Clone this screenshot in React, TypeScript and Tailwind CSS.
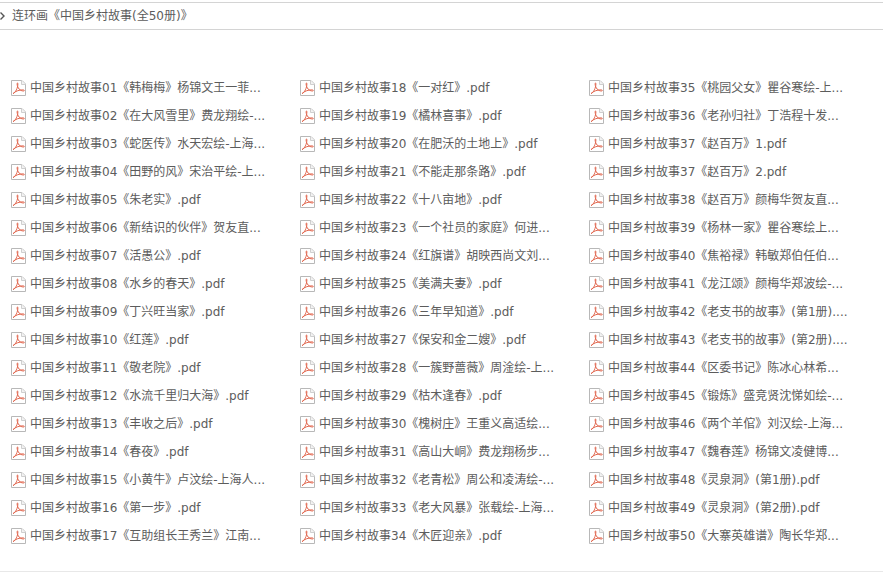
const col1 = [
  '中国乡村故事01《韩梅梅》杨锦文王一菲...',
  '中国乡村故事02《在大风雪里》费龙翔绘-...',
  '中国乡村故事03《蛇医传》水天宏绘-上海...',
  '中国乡村故事04《田野的风》宋治平绘-上...',
  '中国乡村故事05《朱老实》.pdf',
  '中国乡村故事06《新结识的伙伴》贺友直...',
  '中国乡村故事07《活愚公》.pdf',
  '中国乡村故事08《水乡的春天》.pdf',
  '中国乡村故事09《丁兴旺当家》.pdf',
  '中国乡村故事10《红莲》.pdf',
  '中国乡村故事11《敬老院》.pdf',
  '中国乡村故事12《水流千里归大海》.pdf',
  '中国乡村故事13《丰收之后》.pdf',
  '中国乡村故事14《春夜》.pdf',
  '中国乡村故事15《小黄牛》卢汶绘-上海人...',
  '中国乡村故事16《第一步》.pdf',
  '中国乡村故事17《互助组长王秀兰》江南...',
]

const col2 = [
  '中国乡村故事18《一对红》.pdf',
  '中国乡村故事19《橘林喜事》.pdf',
  '中国乡村故事20《在肥沃的土地上》.pdf',
  '中国乡村故事21《不能走那条路》.pdf',
  '中国乡村故事22《十八亩地》.pdf',
  '中国乡村故事23《一个社员的家庭》何进...',
  '中国乡村故事24《红旗谱》胡映西尚文刘...',
  '中国乡村故事25《美满夫妻》.pdf',
  '中国乡村故事26《三年早知道》.pdf',
  '中国乡村故事27《保安和金二嫂》.pdf',
  '中国乡村故事28《一簇野蔷薇》周淦绘-上...',
  '中国乡村故事29《枯木逢春》.pdf',
  '中国乡村故事30《槐树庄》王重义高适绘...',
  '中国乡村故事31《高山大峒》费龙翔杨步...',
  '中国乡村故事32《老青松》周公和凌涛绘-...',
  '中国乡村故事33《老大风暴》张载绘-上海...',
  '中国乡村故事34《木匠迎亲》.pdf',
]

const col3 = [
  '中国乡村故事35《桃园父女》瞿谷寒绘-上...',
  '中国乡村故事36《老孙归社》丁浩程十发...',
  '中国乡村故事37《赵百万》1.pdf',
  '中国乡村故事37《赵百万》2.pdf',
  '中国乡村故事38《赵百万》颜梅华贺友直...',
  '中国乡村故事39《杨林一家》瞿谷寒绘上...',
  '中国乡村故事40《焦裕禄》韩敏郑伯任伯...',
  '中国乡村故事41《龙江颂》颜梅华郑波绘-...',
  '中国乡村故事42《老支书的故事》(第1册)....',
  '中国乡村故事43《老支书的故事》(第2册)....',
  '中国乡村故事44《区委书记》陈冰心林希...',
  '中国乡村故事45《锻炼》盛竞贤沈悌如绘-...',
  '中国乡村故事46《两个羊倌》刘汉绘-上海...',
  '中国乡村故事47《魏春莲》杨锦文凌健博...',
  '中国乡村故事48《灵泉洞》(第1册).pdf',
  '中国乡村故事49《灵泉洞》(第2册).pdf',
  '中国乡村故事50《大寨英雄谱》陶长华郑...',
]

function PdfIcon() {
  return (
    <svg width="15" height="16" viewBox="0 0 15 16" className="shrink-0">
      <path d="M0.5 0.5H11L14.5 4V15.5H0.5Z" fill="#fff" stroke="#b8b8b8" />
      <path d="M10.5 0.5V4.5H14.5" fill="#f2f2f2" stroke="#cfcfcf" />
      <path
        d="M2 13.6C4.6 12.6 6.8 8 6.9 3.8C6.9 2.6 6 2.6 6.1 4C6.4 8 9 11 12.6 11C13.6 11 13.6 9.9 12.4 9.9C8.6 9.7 4.6 11 2 13.6Z"
        fill="none"
        stroke="#e2674f"
        strokeWidth="1"
      />
    </svg>
  )
}

function FileColumn({ files }: { files: string[] }) {
  return (
    <ul className="flex flex-col">
      {files.map((name) => (
        <li key={name} className="flex h-[28px] items-center gap-[4px]">
          <PdfIcon />
          <span className="whitespace-nowrap">{name}</span>
        </li>
      ))}
    </ul>
  )
}

export default function App() {
  return (
    <div className="h-[582px] w-[883px] overflow-hidden bg-white pt-[2px] font-['DejaVu_Sans','Noto_Sans_CJK_SC',sans-serif] text-xs text-[#5c5c5c]">
      <header className="flex h-[28px] items-center gap-[7px] border-y border-[#d4d4d4]">
        <svg width="5" height="8" viewBox="0 0 5 8" className="shrink-0">
          <path d="M0.5 0.5L4 4L0.5 7.5" fill="none" stroke="#555" strokeWidth="1.4" />
        </svg>
        <span>连环画《中国乡村故事(全50册)》</span>
      </header>
      <main className="grid grid-cols-[289px_289px_289px] pl-[11px] pt-[44px]">
        <FileColumn files={col1} />
        <FileColumn files={col2} />
        <FileColumn files={col3} />
      </main>
      <footer className="mt-[21px] border-t border-[#e8e8e8]" />
    </div>
  )
}
